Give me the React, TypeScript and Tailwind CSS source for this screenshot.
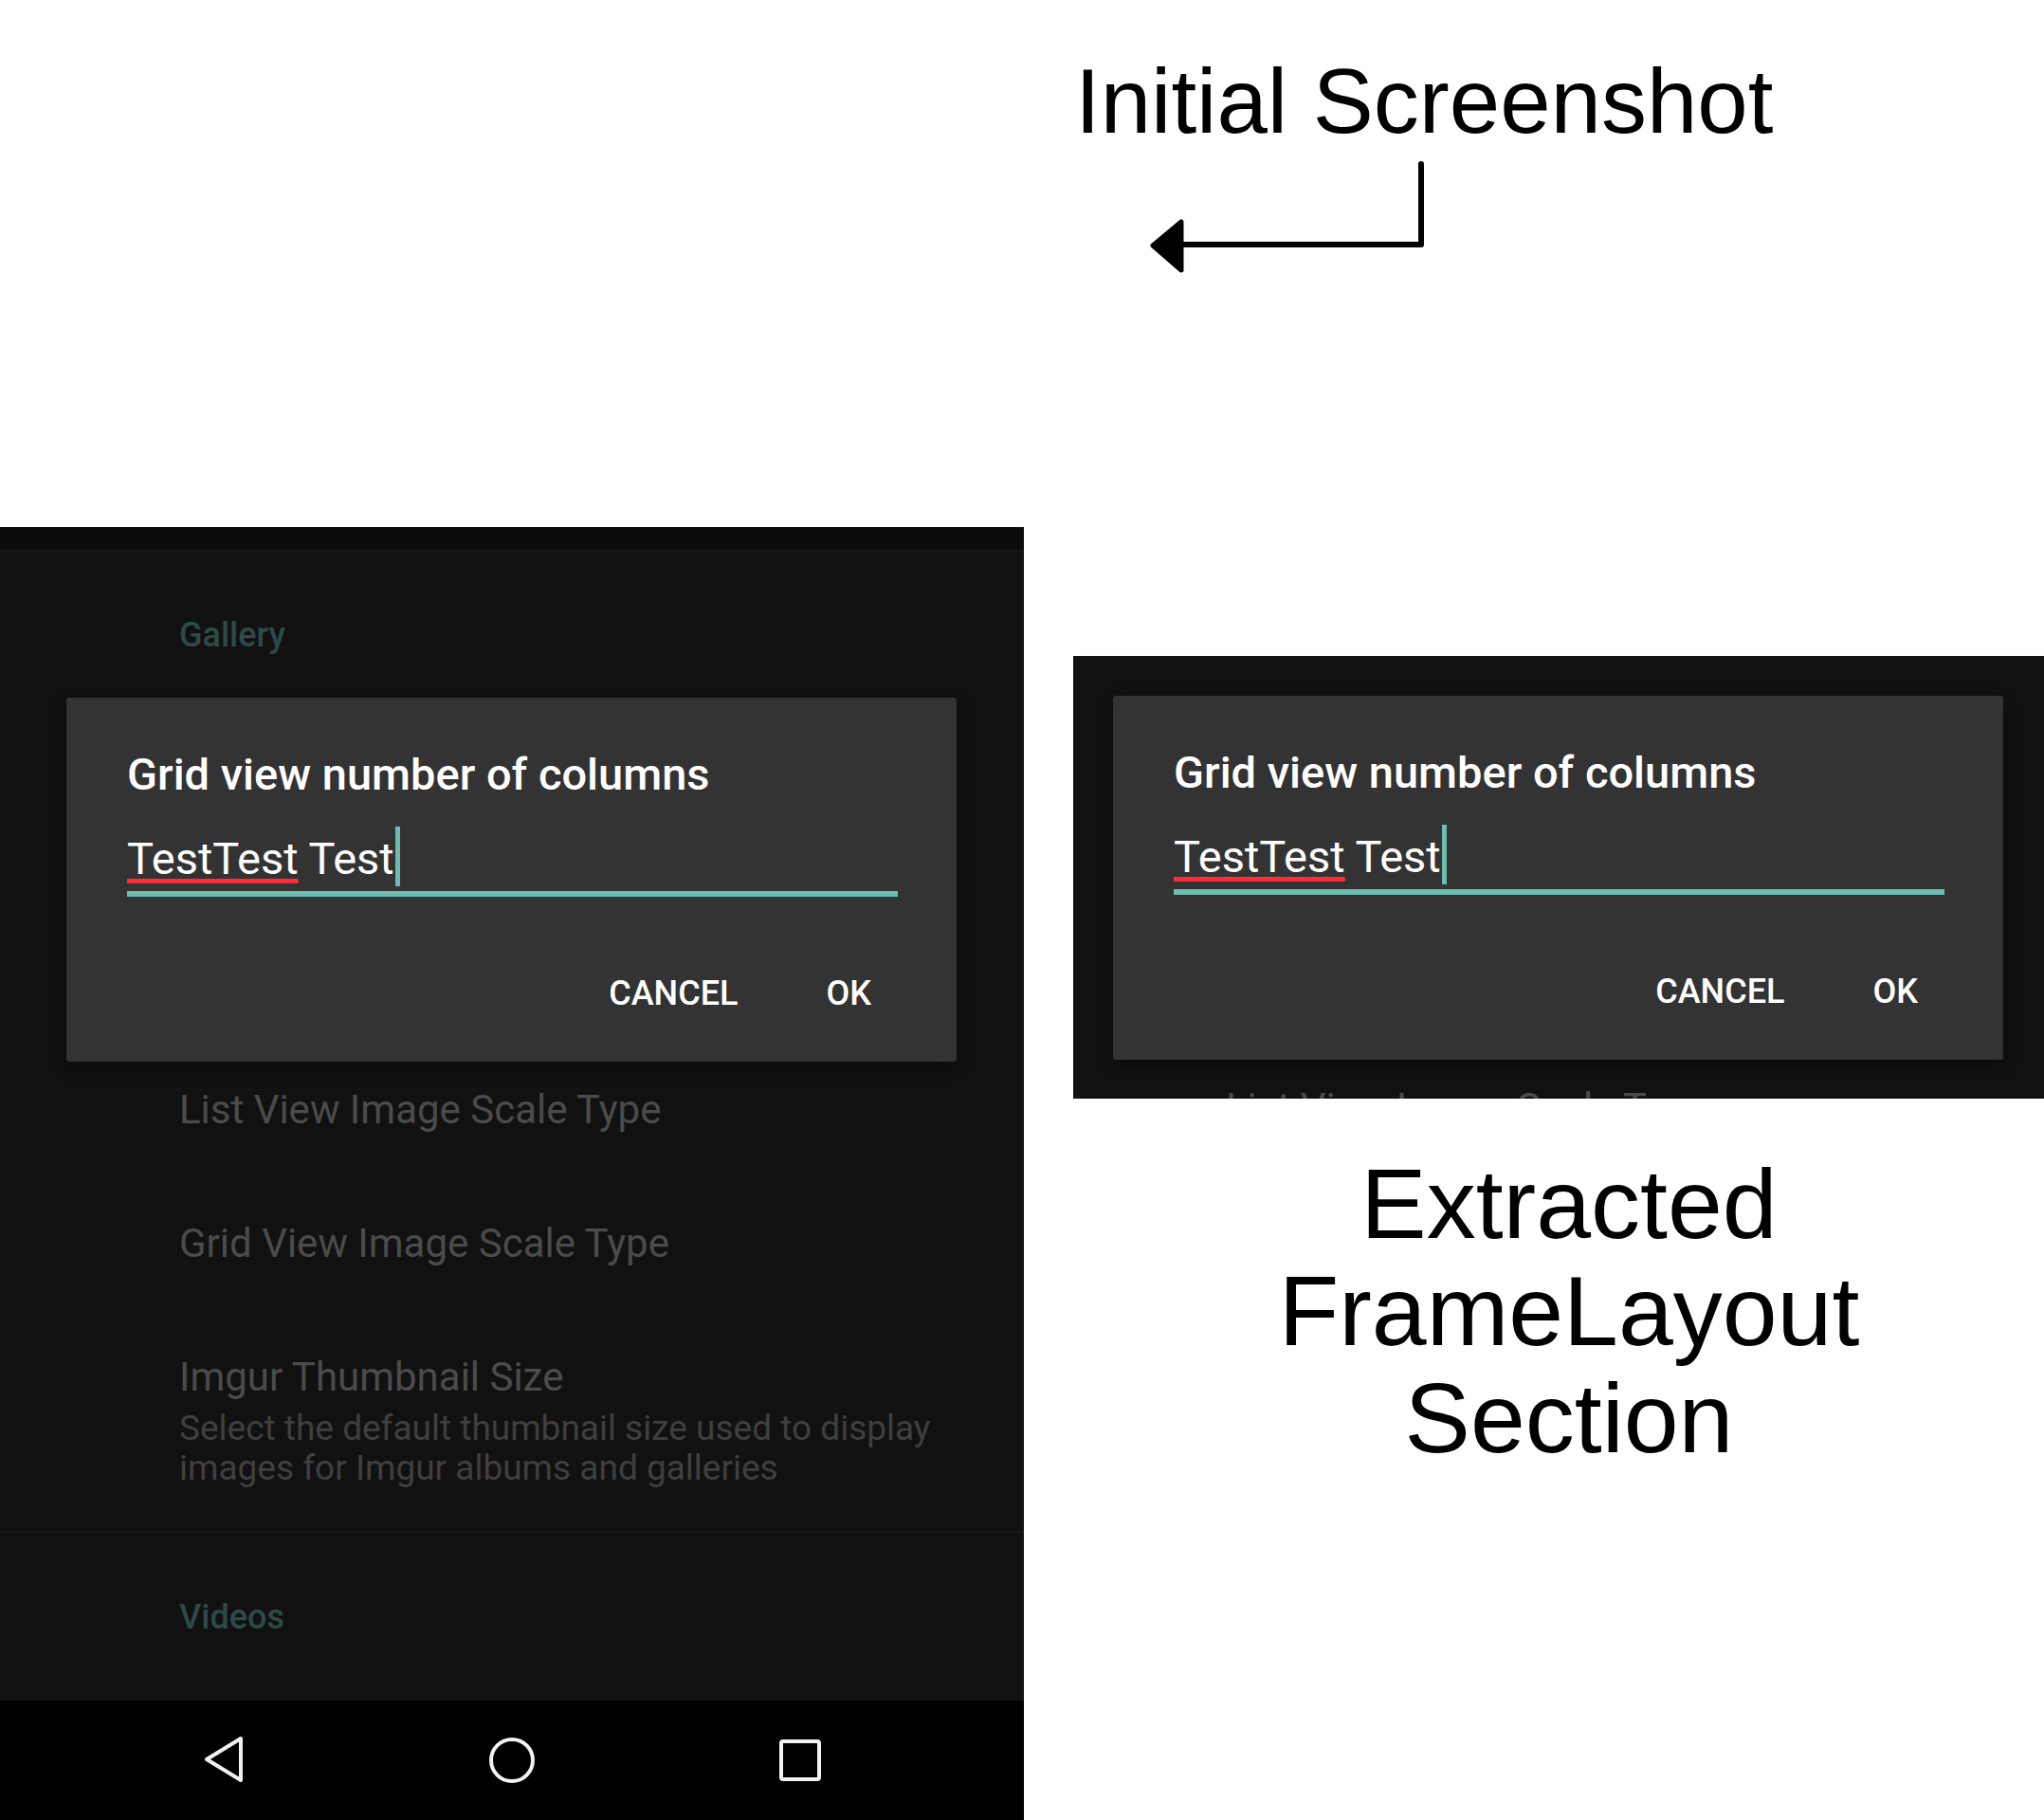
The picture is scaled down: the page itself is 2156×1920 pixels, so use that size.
import React from 'react';

function NavIcons() {
    return (
        <div className="mt-auto flex h-[126px] items-center justify-center gap-[240px] bg-black">
            <svg className="block" width="64" height="64" viewBox="0 0 64 64" fill="none">
                <path d="M14 31 L50 9 L50 53 Z" stroke="#f2f2f2" strokeWidth="4" strokeLinejoin="round" />
            </svg>
            <svg className="block" width="64" height="64" viewBox="0 0 64 64" fill="none">
                <circle cx="32" cy="32" r="22" stroke="#f2f2f2" strokeWidth="4" />
            </svg>
            <svg className="block" width="64" height="64" viewBox="0 0 64 64" fill="none">
                <rect x="12" y="12" width="40" height="40" rx="2" stroke="#f2f2f2" strokeWidth="4" />
            </svg>
        </div>
    );
}

function ColumnsDialog({ className = '' }: { className?: string }) {
    return (
        <div
            className={`ml-[70px] mr-[71px] h-[384px] rounded-[3px] bg-[#333333] pl-[64px] pr-[62px] pt-[57px] shadow-[0_6px_18px_rgba(0,0,0,0.45)] ${className}`}
        >
            <h2 className="text-[47px] font-medium leading-none text-white">
                Grid view number of columns
            </h2>
            <div className="mt-[32px] flex items-start">
                <div className="mt-[10px] whitespace-pre text-[47px] leading-none text-white">
                    <span className="underline decoration-[#ff2d3a] decoration-[5px] underline-offset-[5px]">
                        TestTest
                    </span>
                    {' Test'}
                </div>
                <div className="ml-px h-[63px] w-[5px] bg-[#6cbcb0]" />
            </div>
            <div className="mt-[5px] h-[6px] bg-[#6cbcb0]" />
            <div className="mt-[84px] flex justify-end gap-[93px] pr-[28px] text-[36px] font-medium leading-none text-white">
                <span>CANCEL</span>
                <span>OK</span>
            </div>
        </div>
    );
}

function PrefTitle({ children, className = '' }: { children: React.ReactNode; className?: string }) {
    return (
        <div className={`pl-[189px] text-[42px] leading-none text-[#4b4b4b] ${className}`}>
            {children}
        </div>
    );
}

function SettingsScreen() {
    return (
        <div className="flex h-[1364px] w-[1080px] shrink-0 flex-col bg-[#111111] font-[Roboto,sans-serif]">
            <div className="h-[26px] border-b-2 border-[#171717] bg-[#0c0c0c]" />
            <div className="mt-[70px] pl-[189px] text-[36px] font-medium leading-none text-[#2e4a47]">
                Gallery
            </div>
            <ColumnsDialog className="mt-[48px]" />
            <PrefTitle className="mt-[30px]">List View Image Scale Type</PrefTitle>
            <PrefTitle className="mt-[99px]">Grid View Image Scale Type</PrefTitle>
            <PrefTitle className="mt-[99px]">Imgur Thumbnail Size</PrefTitle>
            <p className="mt-[12px] pl-[189px] text-[37px] leading-[42px] text-[#3f3f3f]">
                Select the default thumbnail size used to display
                <br />
                images for Imgur albums and galleries
            </p>
            <div className="mt-[46px] h-px bg-[#1c1c1c]" />
            <div className="mt-[71px] pl-[189px] text-[36px] font-medium leading-none text-[#2e4a47]">
                Videos
            </div>
            <NavIcons />
        </div>
    );
}

// same screen, cut down to the part around the dialog
function ExtractedFrame() {
    return (
        <div className="ml-[52px] mt-[398px] h-[467px] w-[1024px] overflow-hidden bg-[#111111]">
            <div className="-ml-[28px] w-[1080px] font-[Roboto,sans-serif]">
                <ColumnsDialog className="mt-[42px]" />
                <PrefTitle className="mt-[30px]">List View Image Scale Type</PrefTitle>
            </div>
        </div>
    );
}

export default function App() {
    return (
        <div className="flex min-h-screen w-full bg-white font-['Liberation_Sans',Arial,sans-serif] text-black">
            <div className="w-[1080px] shrink-0 pt-[556px]">
                <SettingsScreen />
            </div>
            <div className="flex flex-1 flex-col">
                <h1 className="ml-[54px] mt-[59px] text-[96px] font-normal leading-none">
                    Initial Screenshot
                </h1>
                <svg className="ml-[125px] mt-[13px] block" width="300" height="126" viewBox="0 0 300 126" fill="none">
                    <path d="M294 5 V90 H43" stroke="black" strokeWidth="6" strokeLinecap="round" strokeLinejoin="round" />
                    <path d="M11 91 L41 66 L41 117 Z" fill="black" stroke="black" strokeWidth="5" strokeLinejoin="round" />
                </svg>
                <ExtractedFrame />
                <div className="ml-[74px] mt-[55px] text-center text-[104px] leading-[113px]">
                    Extracted
                    <br />
                    FrameLayout
                    <br />
                    Section
                </div>
            </div>
        </div>
    );
}
